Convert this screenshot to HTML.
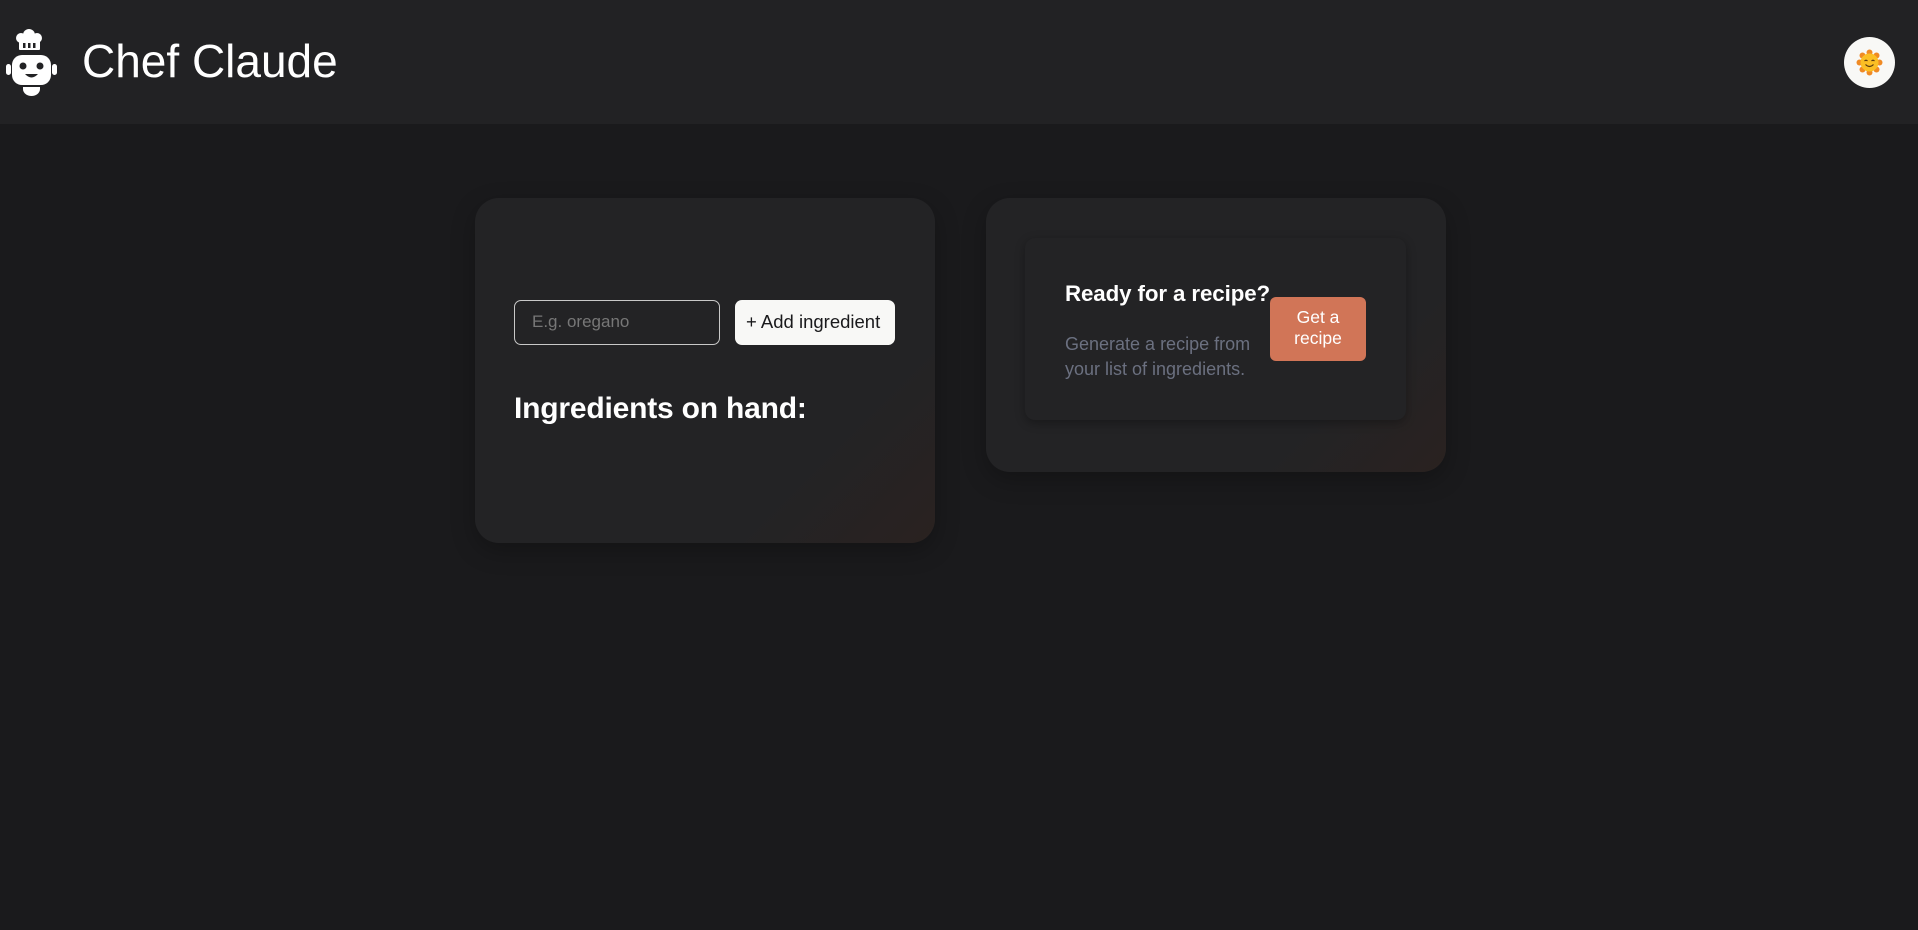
<!DOCTYPE html>
<html><head><meta charset="utf-8"><style>
*{margin:0;padding:0;box-sizing:border-box}
body{width:1918px;height:930px;background:#1a1a1c;font-family:"Liberation Sans",sans-serif;position:relative;overflow:hidden;color:#fff}
.hdr{position:absolute;left:0;top:0;width:1918px;height:124px;background:#222224}
.abs{position:absolute;white-space:nowrap}
.card{position:absolute;background:linear-gradient(135deg,#232325 0%,#232325 75%,#2a2220 100%);border-radius:24px;box-shadow:0 8px 24px rgba(0,0,0,.25)}
</style></head><body>
<div class="hdr"></div>
<svg class="abs" style="left:0;top:28px" width="60" height="70" viewBox="0 28 60 70">
<g fill="#fff">
<circle cx="21" cy="38" r="5"/><circle cx="29" cy="35" r="6"/><circle cx="37" cy="38" r="5"/>
<rect x="19" y="38" width="21" height="12" rx="1"/>
<rect x="12" y="55" width="39" height="30" rx="10"/>
<rect x="6" y="64" width="5" height="11" rx="2.5"/><rect x="52" y="64" width="5" height="11" rx="2.5"/>
<path d="M23 87 h17 v2 a8.5 7 0 0 1 -17 0z"/>
</g>
<g fill="#222224"><rect x="23" y="43" width="2.5" height="5"/><rect x="28" y="43" width="2.5" height="5"/><rect x="33" y="43" width="2.5" height="5"/>
<circle cx="23" cy="66" r="3.5"/><circle cx="40" cy="66" r="3.5"/>
<path d="M25 74 q6.5 7 13 0z"/></g>
</svg>
<div class="abs" style="left:82px;top:34px;font-size:46px;line-height:54px">Chef Claude</div>
<div class="abs" style="left:1844px;top:37px;width:51px;height:51px;border-radius:50%;background:#f8f8f6"></div>
<svg class="abs" style="left:1856px;top:49px" width="27" height="27" viewBox="0 0 27 27">
<g fill="#f08a24"><circle cx="13.5" cy="3.5" r="3"/><circle cx="13.5" cy="23.5" r="3"/><circle cx="3.5" cy="13.5" r="3"/><circle cx="23.5" cy="13.5" r="3"/><circle cx="6.5" cy="6.5" r="3"/><circle cx="20.5" cy="6.5" r="3"/><circle cx="6.5" cy="20.5" r="3"/><circle cx="20.5" cy="20.5" r="3"/></g>
<circle cx="13.5" cy="13.5" r="9" fill="#fbbf24"/>
<path d="M8.5 12 q1.5-1.5 3 0 M15.5 12 q1.5-1.5 3 0 M9.5 15.5 q4 4 8 0" stroke="#5a3a10" stroke-width="1.1" fill="none"/>
</svg>

<div class="card" style="left:475px;top:198px;width:460px;height:345px"></div>
<div class="abs" style="left:514px;top:300px;width:206px;height:45px;border:1.5px solid #c8c8c8;border-radius:7px"></div>
<div class="abs" style="left:532px;top:312px;font-size:17px;color:#777">E.g. oregano</div>
<div class="abs" style="left:735px;top:300px;width:160px;height:45px;background:#f8f8f6;border-radius:7px"></div>
<div class="abs" style="left:746px;top:311px;font-size:18.5px;color:#1a1a1c">+ Add ingredient</div>
<div class="abs" style="left:514px;top:392px;font-size:30px;font-weight:bold;letter-spacing:-0.2px">Ingredients on hand:</div>

<div class="card" style="left:986px;top:198px;width:460px;height:274px"></div>
<div class="abs" style="left:1025px;top:238px;width:381px;height:182px;background:#232325;border-radius:10px;box-shadow:0 3px 10px rgba(0,0,0,.3)"></div>
<div class="abs" style="left:1065px;top:281px;font-size:22.3px;font-weight:bold;letter-spacing:-0.1px">Ready for a recipe?</div>
<div class="abs" style="left:1065px;top:332px;font-size:18px;line-height:25px;color:#6b7080">Generate a recipe from<br>your list of ingredients.</div>
<div class="abs" style="left:1270px;top:297px;width:96px;height:64px;background:#d17557;border-radius:6px;text-align:center;font-size:17.5px;line-height:21px;padding-top:10px">Get a<br>recipe</div>
</body></html>
